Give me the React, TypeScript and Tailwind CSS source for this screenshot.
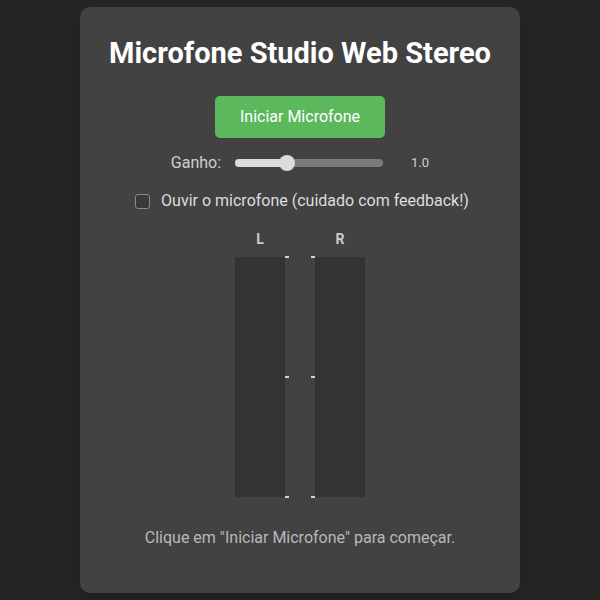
import React from "react";

function Ticks({ side }: { side: "left" | "right" }) {
  return (
    <div className={`flex h-[242px] flex-col justify-between ${side === "left" ? "items-start" : "items-end"}`}>
      <span className="block h-[2px] w-[4px] bg-[#d0d0d0]" />
      <span className="block h-[2px] w-[4px] bg-[#d0d0d0]" />
      <span className="block h-[2px] w-[4px] bg-[#d0d0d0]" />
    </div>
  );
}

export default function App() {
  return (
    <div className="flex min-h-[600px] justify-center bg-[#242424] pt-[7px]" style={{ fontFamily: "Roboto, 'Liberation Sans', sans-serif" }}>
      <div className="flex h-[586px] w-[440px] flex-col items-center rounded-[10px] bg-[#424242] pt-[29px] shadow-lg">
        <h1 className="text-[29px] font-bold leading-[34px] text-white">Microfone Studio Web Stereo</h1>

        <button className="mt-[26px] h-[42px] w-[170px] rounded-[5px] bg-[#5cb85c] text-[16px] text-white">
          Iniciar Microfone
        </button>

        <div className="mt-[15px] flex h-[20px] items-center">
          <span className="text-[16px] text-[#cfcfcf]">Ganho:</span>
          <div className="relative ml-[14px] h-[8px] w-[148px] rounded-full bg-[#7a7a7a]">
            <div className="absolute left-0 top-0 h-[8px] w-[52px] rounded-full bg-[#dcdcdc]" />
            <div className="absolute left-[44px] top-[-4px] h-[16px] w-[16px] rounded-full bg-[#dcdcdc]" />
          </div>
          <span className="ml-[28px] text-[13px] text-[#cfcfcf]">1.0</span>
        </div>

        <label className="mt-[16px] flex h-[24px] items-center pl-[4px]">
          <span className="block h-[15px] w-[15px] rounded-[3px] border border-[#8a8a8a] bg-[#3a3a3a]" />
          <span className="ml-[11px] text-[16px] text-[#dddddd]">Ouvir o microfone (cuidado com feedback!)</span>
        </label>

        <div className="mt-[17px] flex flex-col items-center">
          <div className="flex w-[130px] justify-between text-[14px] font-bold leading-[18px] text-[#cccccc]">
            <span className="w-[50px] text-center">L</span>
            <span className="w-[50px] text-center">R</span>
          </div>
          <div className="mt-[9px] flex">
            <div className="h-[240px] w-[50px] bg-[#333333]" />
            <div className="-mt-[1px] flex w-[30px] justify-between">
              <Ticks side="left" />
              <Ticks side="right" />
            </div>
            <div className="h-[240px] w-[50px] bg-[#333333]" />
          </div>
        </div>

        <p className="mt-[28px] text-[16px] leading-[24px] text-[#b8b8b8]">Clique em "Iniciar Microfone" para começar.</p>
      </div>
    </div>
  );
}
